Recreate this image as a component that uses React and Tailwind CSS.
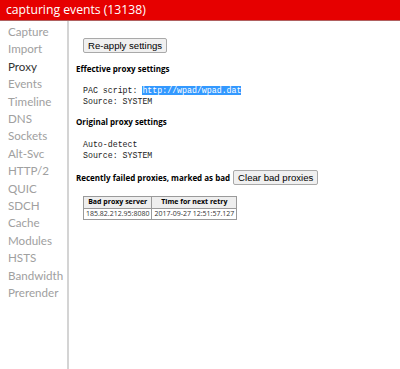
export default function App() {
  const items = ["Capture","Import","Proxy","Events","Timeline","DNS","Sockets","Alt-Svc","HTTP/2","QUIC","SDCH","Cache","Modules","HSTS","Bandwidth","Prerender"];
  const mono = { fontFamily: '"Liberation Mono", monospace' };
  const btn = "h-[15px] px-[4px] bg-[#f0f0f0] border border-[#a9a9a9] rounded-[2px] text-[9.6px] leading-[13px]";
  return (
    <div className="w-[400px] h-[369px] bg-white flex flex-col overflow-hidden" style={{fontFamily: '"Open Sans", sans-serif'}}>
      <div className="h-[21px] shrink-0 bg-[#e60000] border-b border-[#b06060] text-white text-[12.2px] leading-[20px] pl-[6px]">
        capturing events (13138)
      </div>
      <div className="flex flex-1 min-h-0">
        <div className="w-[69px] shrink-0 border-r-2 border-[#d4d4d4] pt-[2px] pl-[8px]" style={{fontFamily: 'Lato, sans-serif'}}>
          {items.map((it) => (
            <div key={it} className={"text-[11.6px] leading-[17.4px] " + (it === "Proxy" ? "text-[#333]" : "text-[#a0a0a0]")}>{it}</div>
          ))}
        </div>
        <div className="flex-1 pl-[7px] pt-[10px] text-black">
          <div className="pl-[7px]">
            <button className={btn} style={{fontFamily: '"Liberation Sans", sans-serif'}}>Re-apply settings</button>
          </div>
          <div className="mt-[8px] font-bold text-[8px] leading-[12px]">Effective proxy settings</div>
          <div className="mt-[10px] pl-[7px] text-[8.25px] leading-[11px] text-[#222]" style={mono}>
            <div>PAC script: <span className="bg-[#3399ff] text-white">http://wpad/wpad.dat</span></div>
            <div>Source: SYSTEM</div>
          </div>
          <div className="mt-[9px] font-bold text-[8px] leading-[12px]">Original proxy settings</div>
          <div className="mt-[11px] pl-[7px] text-[8.25px] leading-[11px] text-[#222]" style={mono}>
            <div>Auto-detect</div>
            <div>Source: SYSTEM</div>
          </div>
          <div className="mt-[9px] flex items-center gap-[3px]">
            <span className="font-bold text-[8px] leading-[12px]">Recently failed proxies, marked as bad</span>
            <button className={btn} style={{fontFamily: '"Liberation Sans", sans-serif'}}>Clear bad proxies</button>
          </div>
          <table className="mt-[11px] ml-[7px] border-collapse text-[7px] leading-[10.5px]">
            <thead>
              <tr className="bg-[#eeeeee]">
                <th className="border border-[#9a9a9a] px-[3px] font-bold">Bad proxy server</th>
                <th className="border border-[#9a9a9a] px-[3px] font-bold">Time for next retry</th>
              </tr>
            </thead>
            <tbody>
              <tr>
                <td className="border border-[#9a9a9a] px-[2px] text-[#333]">185.82.212.95:8080</td>
                <td className="border border-[#9a9a9a] px-[2px] text-[#333]">2017-09-27 12:51:57.127</td>
              </tr>
            </tbody>
          </table>
        </div>
      </div>
    </div>
  );
}
